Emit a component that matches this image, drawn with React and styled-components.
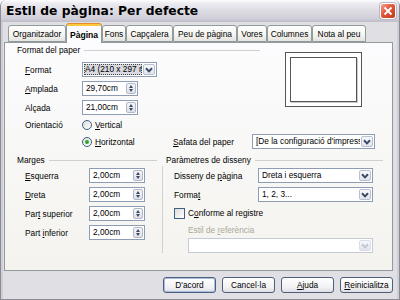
import React from "react";
import styled, { createGlobalStyle } from "styled-components";

const Global = createGlobalStyle`
  html, body { margin: 0; padding: 0; background: #fff; }
  body { font-family: "Liberation Sans", Arial, sans-serif; }
`;

const Window = styled.div`
  width: 400px;
  height: 300px;
  box-sizing: border-box;
  display: flex;
  flex-direction: column;
  background: #e0dfe3;
  border: 1px solid #8c8b95;
  border-top: none;
  border-radius: 6px 6px 0 0;
  overflow: hidden;
  font-size: 8.3px;
  color: #000;
`;

const TitleBar = styled.div`
  height: 22px;
  flex: none;
  display: flex;
  align-items: center;
  justify-content: space-between;
  padding: 0 3px 0 5px;
  background: linear-gradient(#fdfdfe 0%, #ecebf0 15%, #dddce4 50%, #d0cfd9 85%, #bdbcc7 100%);
  font: bold 12.3px "DejaVu Sans", sans-serif;
`;

const CloseBtn = styled.div`
  width: 16px;
  height: 16px;
  box-sizing: border-box;
  border-radius: 3px;
  border: 1px solid #fff;
  box-shadow: 0 0 0 1px #b9b8c2;
  background: linear-gradient(135deg, #f2a592, #e0573a 45%, #c23a1f);
  display: flex;
  align-items: center;
  justify-content: center;
`;

const Body = styled.div`
  flex: 1;
  display: flex;
  flex-direction: column;
  padding: 1px 6px 0 3px;
  box-shadow: inset 2px 0 0 #cfced6, inset -2px 0 0 #cfced6;
`;

const TabRow = styled.div`
  height: 19px;
  display: flex;
  align-items: flex-end;
  padding-left: 4px;
  position: relative;
  z-index: 1;
`;

const Tab = styled.div`
  box-sizing: border-box;
  width: ${p => p.$w}px;
  height: ${p => (p.$active ? 20 : 17)}px;
  margin-bottom: ${p => (p.$active ? -1 : 0)}px;
  border: 1px solid #919b9c;
  border-bottom: ${p => (p.$active ? "none" : "1px solid #919b9c")};
  border-top-color: ${p => (p.$active ? "#e68b2c" : "#919b9c")};
  border-radius: 3px 3px 0 0;
  background: ${p =>
    p.$active
      ? "linear-gradient(#ffc83c 0, #ffc83c 2px, #fcfcfe 2px)"
      : "linear-gradient(#ffffff, #f4f4f1 60%, #e4e3dd)"};
  font-weight: ${p => (p.$active ? "bold" : "normal")};
  font-size: ${p => (p.$active ? 8.6 : 8.4)}px;
  display: flex;
  align-items: center;
  justify-content: center;
  padding-top: ${p => (p.$active ? 2 : 0)}px;
  white-space: nowrap;
`;

const Panel = styled.div`
  box-sizing: border-box;
  height: 229px;
  border: 1px solid #919b9c;
  background: linear-gradient(#fcfcfe, #f4f3ee);
  padding: 2px 0 0 12px;
`;

const Header = styled.div`
  height: 10px;
  display: flex;
  align-items: center;
  gap: 4px;
  white-space: nowrap;
  &::after {
    content: "";
    flex: 1;
    border-top: 1px solid #d0d0cc;
  }
`;

const TopSection = styled.div`
  display: flex;
`;

const Column = styled.div`
  width: ${p => p.$w}px;
  display: flex;
  flex-direction: column;
`;

const Row = styled.div`
  display: grid;
  grid-template-columns: ${p => p.$cols};
  align-items: center;
  height: ${p => p.$h || 15}px;
  margin-top: ${p => p.$mt || 0}px;
  padding-left: ${p => p.$indent || 8}px;
  white-space: nowrap;
  color: ${p => (p.$disabled ? "#aca899" : "#000")};
`;

const Preview = styled.div`
  width: 77px;
  height: 55px;
  box-sizing: border-box;
  border: 1px solid #555;
  background: #fff;
  padding: 4px;
  margin: 7px 0 0 25px;
`;

const PreviewPage = styled.div`
  height: 100%;
  box-sizing: border-box;
  border: 1px solid #555;
  box-shadow: 1px 1px 0 #c8c8c8;
`;

const Box = styled.div`
  box-sizing: border-box;
  width: ${p => p.$w}px;
  height: 15px;
  border: 1px solid ${p => (p.$disabled ? "#c4cad6" : "#8d9db5")};
  background: #fff;
  display: flex;
  align-items: center;
  padding: 1px;
  gap: 1px;
`;

const BoxText = styled.span`
  flex: 1;
  min-width: 0;
  overflow: hidden;
  text-overflow: clip;
  white-space: nowrap;
  padding-left: 2px;
  height: 11px;
  line-height: 11px;
  ${p =>
    p.$focus &&
    `background: #d9d9e0; outline: 1px dotted #444; outline-offset: -1px; padding-left: 1px;`}
`;

const DropBtn = styled.span`
  width: 12px;
  height: 11px;
  flex: none;
  box-sizing: border-box;
  border: 1px solid ${p => (p.$disabled ? "#dcdde4" : "#b7bfd0")};
  border-radius: 2px;
  background: linear-gradient(#f7f8fb, #e1e4ec);
  display: flex;
  align-items: center;
  justify-content: center;
`;

const SpinBtn = styled.span`
  width: 10px;
  height: 11px;
  flex: none;
  box-sizing: border-box;
  border: 1px solid #b3b8c6;
  border-radius: 2px;
  background: linear-gradient(#f5f5f8, #dfe0e8);
  display: flex;
  flex-direction: column;
  align-items: center;
  justify-content: center;
  gap: 1px;
`;

const Arrow = styled.span`
  width: 0;
  height: 0;
  border-left: 2.5px solid transparent;
  border-right: 2.5px solid transparent;
  ${p => (p.$up ? "border-bottom" : "border-top")}: 3px solid #3b4a66;
`;

const Radio = styled.span`
  width: 10px;
  height: 10px;
  box-sizing: border-box;
  border-radius: 50%;
  border: 1px solid #3f5f87;
  background: linear-gradient(135deg, #dcdcd7, #fff);
  display: inline-flex;
  align-items: center;
  justify-content: center;
  &::after {
    content: "";
    width: 4px;
    height: 4px;
    border-radius: 50%;
    background: #2aa82a;
    display: ${p => (p.$checked ? "block" : "none")};
  }
`;

const Option = styled.span`
  display: flex;
  align-items: center;
  gap: 3px;
`;

const Check = styled.span`
  width: 11px;
  height: 11px;
  box-sizing: border-box;
  border: 1px solid #3f5f87;
  background: linear-gradient(135deg, #dcdcd7, #fff);
`;

const BottomSection = styled.div`
  display: flex;
  margin-top: 6px;
`;

const Separator = styled.div`
  width: 1px;
  background: #d0d0cc;
  margin: 11px 3px 0 5px;
`;

const ButtonRow = styled.div`
  height: 16px;
  margin-top: 6px;
  display: flex;
  justify-content: flex-end;
  gap: 6px;
`;

const Button = styled.div`
  width: 53px;
  height: 16px;
  box-sizing: border-box;
  border: 1px solid #4f5e7b;
  border-radius: 3px;
  background: linear-gradient(#ffffff, #f1f1f4 70%, #dcdce2);
  box-shadow: ${p => (p.$default ? "inset 0 0 0 1px #a8bde0" : "none")};
  display: flex;
  align-items: center;
  justify-content: center;
  font-size: 8.3px;
`;

const Chevron = ({ color }) => (
  <svg width="8" height="6" viewBox="0 0 8 6">
    <polyline points="1,1.2 4,4.4 7,1.2" fill="none" stroke={color} strokeWidth="2" />
  </svg>
);

const Select = ({ text, w, focus, disabled }) => (
  <Box $w={w} $disabled={disabled}>
    <BoxText $focus={focus}>{text}</BoxText>
    <DropBtn $disabled={disabled}>
      <Chevron color={disabled ? "#c2c6d0" : "#3b4a66"} />
    </DropBtn>
  </Box>
);

const Spin = ({ value, w = 56 }) => (
  <Box $w={w}>
    <BoxText>{value}</BoxText>
    <SpinBtn>
      <Arrow $up />
      <Arrow />
    </SpinBtn>
  </Box>
);

const tabs = [
  ["Organitzador", 58],
  ["Pàgina", 36, true],
  ["Fons", 24],
  ["Capçalera", 47],
  ["Peu de pàgina", 64],
  ["Vores", 30],
  ["Columnes", 45],
  ["Nota al peu", 54],
];

const margins = [
  [<><u>E</u>squerra</>, "2,00cm"],
  [<><u>D</u>reta</>, "2,00cm"],
  [<>Par<u>t</u> superior</>, "2,00cm"],
  [<>Part <u>i</u>nferior</>, "2,00cm"],
];

export default function App() {
  return (
    <>
      <Global />
      <Window>
        <TitleBar>
          <span>Estil de pàgina: Per defecte</span>
          <CloseBtn>
            <svg width="10" height="10" viewBox="0 0 10 10">
              <path d="M1.5 1.5 L8.5 8.5 M8.5 1.5 L1.5 8.5" stroke="#fff" strokeWidth="1.8" />
            </svg>
          </CloseBtn>
        </TitleBar>
        <Body>
          <TabRow>
            {tabs.map(([name, w, active]) => (
              <Tab key={name} $w={w} $active={active}>{name}</Tab>
            ))}
          </TabRow>
          <Panel>
            <TopSection>
              <Column $w={243}>
                <Header>Format del paper</Header>
                <Row $cols="57px auto" $mt={7}>
                  <span><u>F</u>ormat</span>
                  <Select text="A4 (210 x 297 mm)" w={75} focus />
                </Row>
                <Row $cols="57px auto" $mt={4}>
                  <span><u>A</u>mplada</span>
                  <Spin value="29,70cm" />
                </Row>
                <Row $cols="57px auto" $mt={4}>
                  <span>Alçada</span>
                  <Spin value="21,00cm" />
                </Row>
                <Row $cols="57px auto" $mt={3} $h={14}>
                  <span>Orientació</span>
                  <Option><Radio /><span><u>V</u>ertical</span></Option>
                </Row>
              </Column>
              <Preview>
                <PreviewPage />
              </Preview>
            </TopSection>
            <Row $cols="57px 91px 79px 123px" $mt={2}>
              <span />
              <Option><Radio $checked /><span><u>H</u>oritzontal</span></Option>
              <span><u>S</u>afata del paper</span>
              <Select text="[De la configuració d'impressora]" w={123} />
            </Row>
            <BottomSection>
              <Column $w={140}>
                <Header>Marges</Header>
                {margins.map(([label, value], i) => (
                  <Row key={i} $cols="64px auto" $mt={i === 0 ? 3 : 4}>
                    <span>{label}</span>
                    <Spin value={value} />
                  </Row>
                ))}
              </Column>
              <Separator />
              <Column $w={217}>
                <Header>Paràmetres de disseny</Header>
                <Row $cols="84px auto" $mt={3}>
                  <span>Disseny de <u>p</u>àgina</span>
                  <Select text="Dreta i esquerra" w={115} />
                </Row>
                <Row $cols="84px auto" $mt={4}>
                  <span>Forma<u>t</u></span>
                  <Select text="1, 2, 3..." w={115} />
                </Row>
                <Row $cols="14px auto" $mt={4} $h={14}>
                  <Check />
                  <span>C<u>o</u>nforme al registre</span>
                </Row>
                <Row $cols="auto" $mt={5} $h={10} $indent={22} $disabled>
                  <span>Estil de <u>r</u>eferència</span>
                </Row>
                <Row $cols="auto" $mt={3} $indent={22}>
                  <Select text="" w={185} disabled />
                </Row>
              </Column>
            </BottomSection>
          </Panel>
          <ButtonRow>
            <Button $default>D'acord</Button>
            <Button>Cancel·la</Button>
            <Button><span><u>A</u>juda</span></Button>
            <Button><span><u>R</u>einicialitza</span></Button>
          </ButtonRow>
        </Body>
      </Window>
    </>
  );
}
